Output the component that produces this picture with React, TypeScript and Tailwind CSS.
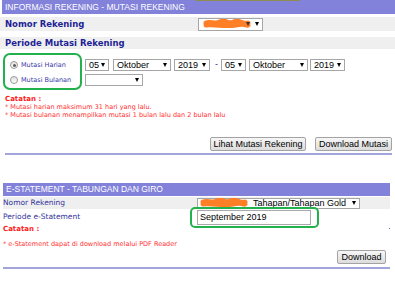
import type { ReactNode } from "react";

const arial = { fontFamily: '"Liberation Sans", Arial, sans-serif' };
const verdana = { fontFamily: '"DejaVu Sans", Verdana, sans-serif' };

const Arrow = () => (
  <span className="inline-block h-0 w-0 border-x-[2.5px] border-t-[4px] border-x-transparent border-t-black" />
);

const FakeSelect = ({
  className,
  children,
}: {
  className: string;
  children?: ReactNode;
}) => (
  <div
    className={`relative flex items-center justify-between border border-[#a6a6a6] bg-white pl-[3px] pr-[3px] text-[9px] leading-none text-black ${className}`}
    style={arial}
  >
    <span>{children}</span>
    <Arrow />
  </div>
);

// orange marker over the hidden account number
const Scribble = ({ className }: { className: string }) => (
  <svg
    className={`absolute ${className}`}
    viewBox="0 0 50 10"
    width="50"
    height="10"
  >
    <path
      d="M4 4 C9 2 13 6 18 3 S27 6 32 3 S41 6 46 4 M4 6 C14 5 24 8 34 6 S44 7 46 6"
      fill="none"
      stroke="#ff7f27"
      strokeWidth="5"
      strokeLinecap="round"
      strokeLinejoin="round"
    />
  </svg>
);

const Radio = ({ checked, label }: { checked?: boolean; label: string }) => (
  <div className="flex h-[8px] items-center">
    <span className="flex h-[8px] w-[8px] items-center justify-center rounded-full border border-[#9a9a9a] bg-gradient-to-b from-[#e2e2e2] to-[#fbfbfb]">
      {checked && <span className="h-[3px] w-[3px] rounded-full bg-[#5a5a5a]" />}
    </span>
    <span className="ml-[3px] text-[6.5px] leading-none text-[#3838a8]" style={verdana}>
      {label}
    </span>
  </div>
);

const Button = ({ label, className }: { label: string; className: string }) => (
  <div
    className={`flex h-[14px] items-center justify-center rounded-[2px] border border-[#a3a3a3] bg-gradient-to-b from-[#f7f7f7] to-[#dcdcdc] text-[9px] leading-none text-black ${className}`}
    style={arial}
  >
    {label}
  </div>
);

export default function App() {
  return (
    <div className="relative h-[300px] w-[395px] overflow-hidden bg-white">
      {/* Mutasi rekening */}
      <div className="relative ml-[2px] h-[14px] bg-[#8282da] pl-[3px] text-[8.5px] leading-[14px] text-white" style={arial}>
        <span className="absolute left-[193px] top-0 h-[1px] w-[105px] bg-[#8e8c52]" />
        INFORMASI REKENING - MUTASI REKENING
      </div>

      <div className="mt-[3px] flex h-[14px] items-center bg-[#efefef]">
        <div className="w-[198px] pl-[5px] text-[8.5px] font-bold leading-none text-[#1f1f96]" style={verdana}>
          Nomor Rekening
        </div>
        <div className="relative">
          <FakeSelect className="h-[13px] w-[65px]">{"\u00a0"}</FakeSelect>
          <Scribble className="left-[4px] top-[1px]" />
          <span className="absolute left-[48px] top-[4px] h-0 w-0 border-x-[2.5px] border-t-[4px] border-x-transparent border-t-[#333]" />
        </div>
      </div>

      <div className="mt-[6px] flex h-[12px] items-center bg-[#efefef] pl-[5px] text-[8.5px] font-bold leading-none text-[#1f1f96]" style={verdana}>
        Periode Mutasi Rekening
      </div>

      <div className="mt-[4px] flex pl-[3px]">
        <div className="flex h-[37px] w-[79px] flex-col gap-[7px] rounded-[7px] border-2 border-[#22b14c] pl-[5px] pt-[6px]">
          <Radio checked label="Mutasi Harian" />
          <Radio label="Mutasi Bulanan" />
        </div>
        <div className="ml-[3px] pt-[6px]">
          <div className="flex h-[12px] items-center">
            <FakeSelect className="h-[12px] w-[24px]">05</FakeSelect>
            <FakeSelect className="ml-[4px] h-[12px] w-[58px]">Oktober</FakeSelect>
            <FakeSelect className="ml-[3px] h-[12px] w-[36px]">2019</FakeSelect>
            <span className="ml-[5px] mr-[3px] text-[9px] text-[#3333aa]" style={arial}>-</span>
            <FakeSelect className="h-[12px] w-[25px]">05</FakeSelect>
            <FakeSelect className="ml-[3px] h-[12px] w-[59px]">Oktober</FakeSelect>
            <FakeSelect className="ml-[2px] h-[12px] w-[35px]">2019</FakeSelect>
          </div>
          <div className="mt-[3px] flex">
            <FakeSelect className="h-[12px] w-[58px]">{"\u00a0"}</FakeSelect>
          </div>
        </div>
      </div>

      <div className="mt-[5px] pl-[5px]" style={verdana}>
        <div className="text-[7px] font-bold leading-[8px] text-[#ff1a1a]">Catatan :</div>
        <div className="text-[6.5px] leading-[8px] text-[#ff3030]">* Mutasi harian maksimum 31 hari yang lalu.</div>
        <div className="text-[6.5px] leading-[8px] text-[#ff3030]">
          * Mutasi bulanan menampilkan mutasi 1 bulan lalu dan 2 bulan lalu
        </div>
      </div>

      <div className="mt-[18px] flex justify-end gap-[9px] pr-[3px]">
        <Button label="Lihat Mutasi Rekening" className="w-[96px]" />
        <Button label="Download Mutasi" className="w-[77px]" />
      </div>
      <div className="ml-[5px] mr-[3px] mt-[2px] h-[2px] bg-[#a4a4dc]" />

      {/* E-statement */}
      <div className="ml-[3px] mr-[5px] mt-[28px] h-[13px] bg-[#8282da] pl-[3px] text-[8.5px] leading-[13px] text-white" style={arial}>
        E-STATEMENT - TABUNGAN DAN GIRO
      </div>

      <div className="relative ml-[3px] mr-[5px]">
        <div className="mt-[1px] flex h-[12px] items-center bg-[#efefef]">
          <div className="w-[194px] text-[7.5px] leading-none text-[#33339c]" style={verdana}>
            Nomor Rekening
          </div>
          <div className="relative">
            <div className="flex h-[11px] w-[163px] items-center justify-between border border-[#a6a6a6] bg-white pl-[55px] pr-[3px] text-[9px] leading-none text-black" style={arial}>
              <span>Tahapan/Tahapan Gold</span>
              <Arrow />
            </div>
            <Scribble className="left-[2px] top-0" />
          </div>
        </div>

        <div className="flex h-[16px] items-center">
          <div className="w-[194px] text-[7.5px] leading-none text-[#33339c]" style={verdana}>
            Periode e-Statement
          </div>
          <div className="flex h-[15px] w-[114px] items-center border border-[#a9a9a9] bg-white pl-[2px] text-[9px] leading-none text-black" style={arial}>
            September 2019
          </div>
        </div>
        <span className="absolute left-[187px] top-[10px] h-[21px] w-[129px] rounded-[5px] border-2 border-[#22b14c]" />
        <span className="absolute right-[0px] top-[31px] h-[1px] w-[1px] bg-[#6b6bc8]" />

        <div style={verdana}>
          <div className="text-[7px] font-bold leading-[8px] text-[#ff1a1a]">Catatan :</div>
          <div className="mt-[7px] text-[6.5px] leading-[8px] text-[#ff3030]">
            * e-Statement dapat di download melalui PDF Reader
          </div>
        </div>

        <div className="mt-[2px] flex justify-end pr-[4px]">
          <Button label="Download" className="w-[49px]" />
        </div>
        <div className="mt-[3px] h-[2px] bg-[#a4a4dc]" />
      </div>
    </div>
  );
}
